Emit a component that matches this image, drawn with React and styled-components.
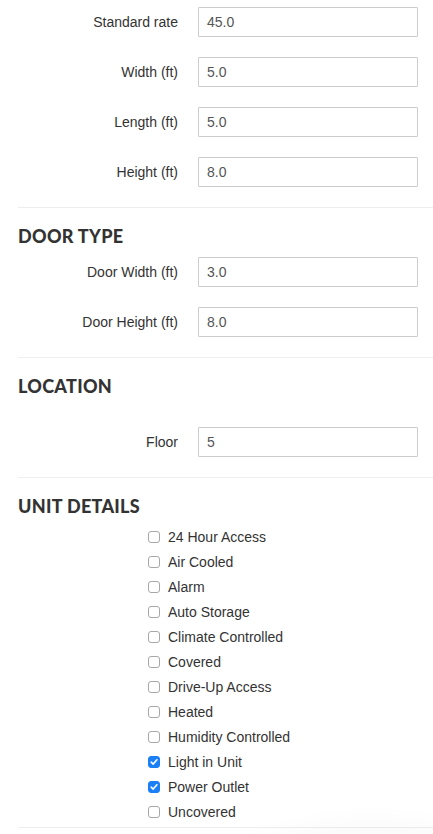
import React, { useState } from 'react';
import styled, { createGlobalStyle } from 'styled-components';

const GlobalStyle = createGlobalStyle`
  html, body {
    margin: 0;
    padding: 0;
    background: #fff;
  }
  body {
    font-family: "Liberation Sans", Arial, sans-serif;
    color: #333;
    overflow: hidden;
  }
`;

const Page = styled.div`
  position: relative;
  width: 433px;
  height: 834px;
  padding: 7px 0 0 18px;
  box-sizing: border-box;
  overflow: hidden;
`;

const Group = styled.div`
  display: flex;
  flex-direction: column;
`;

const FieldRow = styled.div`
  display: flex;
  align-items: center;
  height: 30px;
  margin-bottom: 20px;
`;

const Label = styled.label`
  width: 160px;
  flex: none;
  text-align: right;
  font-size: 14px;
  color: #333;
  margin-right: 20px;
`;

const Input = styled.input`
  width: 220px;
  height: 30px;
  box-sizing: border-box;
  border: 1px solid #ccc;
  border-radius: 1px;
  padding: 0 8px;
  font-family: "Liberation Sans", Arial, sans-serif;
  font-size: 14px;
  color: #555;
  outline: none;
`;

const Divider = styled.hr`
  border: 0;
  border-top: 1px solid #eee;
  margin: 0;
`;

const Heading = styled.h3`
  margin: 18px 0 ${(p) => p.$after}px 0;
  height: 20px;
  line-height: 20px;
  font-family: Lato, "Open Sans", sans-serif;
  font-weight: 900;
  font-size: 18px;
  letter-spacing: 0.3px;
  color: #333;
  text-transform: uppercase;
`;

const CheckList = styled.div`
  display: flex;
  flex-direction: column;
  padding-left: 130px;
  margin-bottom: 3px;
`;

const CheckRow = styled.label`
  display: flex;
  align-items: center;
  height: 25px;
  font-size: 14px;
  color: #333;
  cursor: pointer;
`;

const Box = styled.span`
  width: 12px;
  height: 12px;
  box-sizing: border-box;
  border-radius: 3px;
  margin-right: 8px;
  display: inline-flex;
  align-items: center;
  justify-content: center;
  border: 1px solid ${(p) => (p.$checked ? '#1b7ff5' : '#a8a8a8')};
  background: ${(p) => (p.$checked ? '#1b7ff5' : '#fff')};
`;

const BottomShade = styled.div`
  position: absolute;
  right: -60px;
  bottom: -60px;
  width: 300px;
  height: 90px;
  background: radial-gradient(ellipse at 60% 100%, rgba(0, 0, 0, 0.06), rgba(0, 0, 0, 0) 70%);
  pointer-events: none;
`;

const Check = () => (
  <svg width="8" height="8" viewBox="0 0 8 8">
    <path d="M1.2 4.2 L3.2 6.1 L6.9 1.8" fill="none" stroke="#fff" strokeWidth="1.6" strokeLinecap="round" strokeLinejoin="round" />
  </svg>
);

const features = [
  ['24 Hour Access', false],
  ['Air Cooled', false],
  ['Alarm', false],
  ['Auto Storage', false],
  ['Climate Controlled', false],
  ['Covered', false],
  ['Drive-Up Access', false],
  ['Heated', false],
  ['Humidity Controlled', false],
  ['Light in Unit', true],
  ['Power Outlet', true],
  ['Uncovered', false],
];

function Field({ label, value }) {
  return (
    <FieldRow>
      <Label>{label}</Label>
      <Input defaultValue={value} />
    </FieldRow>
  );
}

export default function App() {
  const [checked, setChecked] = useState(features.map((f) => f[1]));

  const toggle = (i) => {
    setChecked((c) => c.map((v, j) => (j === i ? !v : v)));
  };

  return (
    <Page>
      <GlobalStyle />
      <Group>
        <Field label="Standard rate" value="45.0" />
        <Field label="Width (ft)" value="5.0" />
        <Field label="Length (ft)" value="5.0" />
        <Field label="Height (ft)" value="8.0" />
      </Group>
      <Divider />

      <Heading $after={11}>Door Type</Heading>
      <Group>
        <Field label="Door Width (ft)" value="3.0" />
        <Field label="Door Height (ft)" value="8.0" />
      </Group>
      <Divider />

      <Heading $after={31}>Location</Heading>
      <Group>
        <Field label="Floor" value="5" />
      </Group>
      <Divider />

      <Heading $after={8}>Unit Details</Heading>
      <CheckList>
        {features.map(([name], i) => (
          <CheckRow key={name} onClick={() => toggle(i)}>
            <Box $checked={checked[i]}>{checked[i] && <Check />}</Box>
            {name}
          </CheckRow>
        ))}
      </CheckList>
      <Divider />
      <BottomShade />
    </Page>
  );
}
